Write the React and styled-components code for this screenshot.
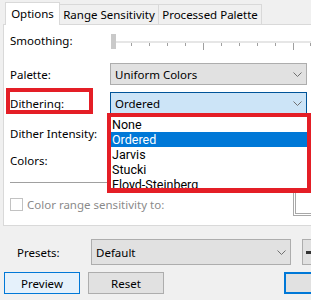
import React from 'react';
import styled, { createGlobalStyle } from 'styled-components';

const Global = createGlobalStyle`
  html, body { margin: 0; padding: 0; background: #f0f0f0; }
  body { font-family: "Noto Sans", "Segoe UI", sans-serif; font-size: 11.5px; color: #000; }
  * { box-sizing: border-box; }
`;

const Window = styled.div`
  position: relative;
  width: 311px;
  height: 300px;
  overflow: hidden;
  background: #f0f0f0;
  font-family: "Noto Sans", "Segoe UI", sans-serif;
  font-size: 11.5px;
  color: #000;
`;

const TabStrip = styled.div`
  display: flex;
  align-items: flex-end;
  height: 24px;
  padding-left: 5px;
`;

const Tab = styled.div`
  width: ${p => p.$w}px;
  height: ${p => (p.$active ? 23 : 20)}px;
  display: flex;
  align-items: center;
  justify-content: center;
  white-space: nowrap;
  background: ${p => (p.$active ? '#fff' : '#f0f0f0')};
  border: 1px solid #d9d9d9;
  border-bottom: none;
  border-left: ${p => (p.$first ? '1px solid #d9d9d9' : 'none')};
  ${p => p.$active && 'position: relative; z-index: 1; margin-bottom: -1px; padding-bottom: 2px;'}
`;

const Panel = styled.div`
  margin-left: 3px;
  width: 340px;
  height: 202px;
  background: #fff;
  border: 1px solid #d9d9d9;
  padding-left: 6px;
`;

const Row = styled.div`
  display: grid;
  grid-template-columns: 100px 196px;
  align-items: center;
  height: ${p => p.$h}px;
  margin-top: ${p => p.$top}px;
`;

const Label = styled.span`
  white-space: nowrap;
`;

const Select = styled.div`
  flex: none;
  display: flex;
  align-items: center;
  justify-content: space-between;
  width: ${p => p.$w}px;
  height: ${p => p.$h}px;
  padding: 0 4px 0 4px;
  background: ${p => (p.$focus ? '#cce4f7' : '#e1e1e1')};
  border: 1px solid ${p => (p.$focus ? '#005499' : '#adadad')};
  white-space: nowrap;
`;

const Chevron = () => (
  <svg width="9" height="5" viewBox="0 0 9 5">
    <polyline points="0.5,0.5 4.5,4.5 8.5,0.5" fill="none" stroke="#707070" strokeWidth="1" />
  </svg>
);

const Slider = () => {
  const ticks = [];
  for (let k = 1; k <= 11; k++) {
    const x = Math.round(3.5 + 17.9 * k) + 0.5;
    const long = k % 5 === 0;
    ticks.push(<line key={k} x1={x} x2={x} y1={13} y2={long ? 20 : 16} stroke="#a0a0a0" strokeWidth="1" />);
  }
  return (
    <svg width="201" height="20" viewBox="0 0 201 20">
      <rect x="1" y="11" width="200" height="2" fill="#e6e6e6" />
      {ticks}
      <rect x="1" y="4" width="5" height="15" fill="#c9c9c9" />
    </svg>
  );
};

const Bottom = styled.div`
  display: grid;
  grid-template-columns: 283px 40px;
`;

const Separator = styled.div`
  margin-top: 11px;
  width: 270px;
  height: 1px;
  background: #a0a0a0;
`;

const CheckRow = styled.div`
  display: flex;
  align-items: center;
  gap: 4px;
  margin-top: 14px;
  height: 14px;
  color: #8a8a8a;
  white-space: nowrap;
`;

const CheckBox = styled.span`
  width: 13px;
  height: 13px;
  background: #fff;
  border: 1px solid #c2c2c2;
  flex: none;
`;

const SunkenBox = styled.div`
  margin-top: 5px;
  height: 40px;
  border: 3px double #a8a8a8;
  background: #fff;
`;

const PresetRow = styled.div`
  display: flex;
  align-items: center;
  margin-top: 13px;
  padding-left: 17px;
  height: 26px;
`;

const PresetLabel = styled.span`
  flex: none;
  width: 74px;
`;

const SmallButton = styled.div`
  flex: none;
  width: 30px;
  height: 26px;
  margin-left: 11px;
  display: flex;
  align-items: center;
  padding-left: 3px;
  background: #e1e1e1;
  border: 1px solid #adadad;
`;

const Dash = styled.span`
  width: 8px;
  height: 3px;
  background: #333;
`;

const ButtonRow = styled.div`
  display: flex;
  margin-top: 7px;
  padding-left: 4px;
`;

const Button = styled.div`
  width: 76px;
  height: 22px;
  margin-left: ${p => p.$ml || 0}px;
  display: flex;
  align-items: center;
  justify-content: center;
  background: ${p => (p.$hot ? '#e5f1fb' : '#e1e1e1')};
  border: ${p => (p.$def ? '2px solid #0078d7' : p.$hot ? '1px solid #0078d7' : '1px solid #adadad')};
  flex: none;
`;

const Annotation = styled.div`
  position: absolute;
  left: ${p => p.$x}px;
  top: ${p => p.$y}px;
  width: ${p => p.$w}px;
  height: ${p => p.$h}px;
  border: 4px solid #e41e26;
  z-index: 5;
`;

const DropList = styled.div`
  position: absolute;
  left: 107px;
  top: 113px;
  width: 206px;
  height: 80px;
  border: 4px solid #e41e26;
  border-right-width: 6px;
  border-bottom-width: 5px;
  background: #fff;
  overflow: hidden;
  z-index: 4;
`;

const Item = styled.div`
  height: 15px;
  line-height: 15px;
  padding-left: 1px;
  font-family: Roboto, "Noto Sans", sans-serif;
  font-size: 12.5px;
  background: ${p => (p.$sel ? '#0078d7' : '#fff')};
  color: ${p => (p.$sel ? '#fff' : '#000')};
  white-space: nowrap;
`;

export default function App() {
  return (
    <Window>
      <Global />
      <TabStrip>
        <Tab $w={55} $active $first>Options</Tab>
        <Tab $w={99}>Range Sensitivity</Tab>
        <Tab $w={103}>Processed Palette</Tab>
      </TabStrip>
      <Panel>
        <Row $h={20} $top={5}>
          <Label>Smoothing:</Label>
          <Slider />
        </Row>
        <Row $h={22} $top={13}>
          <Label>Palette:</Label>
          <Select $w={197} $h={22}>Uniform Colors<Chevron /></Select>
        </Row>
        <Row $h={22} $top={7}>
          <Label>Dithering:</Label>
          <Select $w={197} $h={22} $focus>Ordered<Chevron /></Select>
        </Row>
        <Row $h={22} $top={8}>
          <Label>Dither Intensity:</Label>
        </Row>
        <Row $h={22} $top={5}>
          <Label>Colors:</Label>
        </Row>
        <Bottom>
          <div>
            <Separator />
            <CheckRow>
              <CheckBox />
              Color range sensitivity to:
            </CheckRow>
          </div>
          <SunkenBox />
        </Bottom>
      </Panel>
      <PresetRow>
        <PresetLabel>Presets:</PresetLabel>
        <Select $w={200} $h={26}>Default<Chevron /></Select>
        <SmallButton><Dash /></SmallButton>
      </PresetRow>
      <ButtonRow>
        <Button $hot>Preview</Button>
        <Button $ml={8}>Reset</Button>
        <Button $ml={120} $def />
      </ButtonRow>
      <Annotation $x={6} $y={88} $w={87} $h={26} />
      <DropList>
        <Item>None</Item>
        <Item $sel>Ordered</Item>
        <Item>Jarvis</Item>
        <Item>Stucki</Item>
        <Item>Floyd-Steinberg</Item>
      </DropList>
    </Window>
  );
}
